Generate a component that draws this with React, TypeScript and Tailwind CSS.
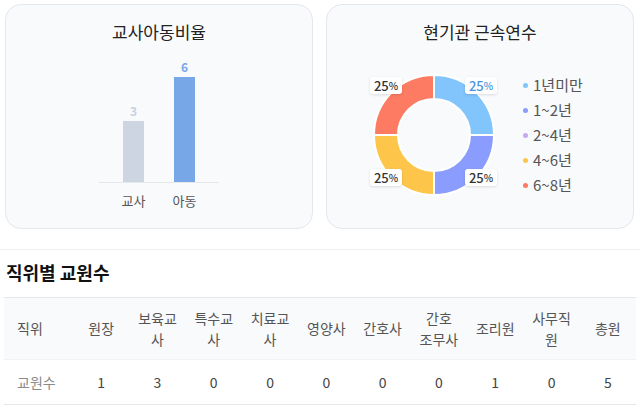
import React from "react";

const bars = [
  { label: "교사", value: 3, height: 61, bar: "bg-[#cdd5e3]", text: "text-[#c9d1de]" },
  { label: "아동", value: 6, height: 105, bar: "bg-[#78a7e8]", text: "text-[#7ba7e8]" },
];

const legend = [
  { label: "1년미만", dot: "bg-[#82c4fc]" },
  { label: "1~2년", dot: "bg-[#8a9cfd]" },
  { label: "2~4년", dot: "bg-[#c6a8f0]" },
  { label: "4~6년", dot: "bg-[#fdc64b]" },
  { label: "6~8년", dot: "bg-[#fd7b63]" },
];

const slices = [
  { d: "M70 10 A60 60 0 0 1 130 70 L106 70 A36 36 0 0 0 70 34 Z", fill: "#82c4fc" },
  { d: "M130 70 A60 60 0 0 1 70 130 L70 106 A36 36 0 0 0 106 70 Z", fill: "#8a9cfd" },
  { d: "M70 130 A60 60 0 0 1 10 70 L34 70 A36 36 0 0 0 70 106 Z", fill: "#fdc64b" },
  { d: "M10 70 A60 60 0 0 1 70 10 L70 34 A36 36 0 0 0 34 70 Z", fill: "#fd7b63" },
];

const pctLabels = [
  { pos: "left-[6px] top-[12px]", color: "text-[#333333]" },
  { pos: "left-[101px] top-[12px]", color: "text-[#4b93e0]" },
  { pos: "left-[6px] top-[104px]", color: "text-[#333333]" },
  { pos: "left-[101px] top-[104px]", color: "text-[#333333]" },
];

const headers: React.ReactNode[] = [
  "원장",
  "보육교사",
  "특수교사",
  "치료교사",
  "영양사",
  "간호사",
  <>
    간호
    <br />
    조무사
  </>,
  "조리원",
  "사무직원",
  "총원",
];
const counts = [1, 3, 0, 0, 0, 0, 0, 1, 0, 5];

function Card({ title, children }: { title: string; children: React.ReactNode }) {
  return (
    <div className="w-[308px] h-[225px] rounded-2xl border border-[#e5e7eb] bg-[#f8fafc] flex flex-col items-center pt-[15px]">
      <h3 className="text-[17px] leading-[24px] text-[#222222]">{title}</h3>
      {children}
    </div>
  );
}

export default function App() {
  return (
    <div className="w-[642px] h-[409px] overflow-hidden bg-white font-['Noto_Sans_CJK_KR','Noto_Sans',sans-serif]">
      <div className="flex gap-[13px] pl-[5px] pt-[4px]">
        {/* 교사아동비율 */}
        <Card title="교사아동비율">
          <div className="w-[120px] mt-[8px]">
            <div className="h-[131px] flex items-end gap-[30px] pl-[24px] border-b border-[#e5e7eb]">
              {bars.map((b) => (
                <div key={b.label} className="w-[21px] flex flex-col items-center">
                  <span className={`text-[12px] leading-[14px] font-bold mb-[3px] ${b.text}`}>{b.value}</span>
                  <div className={`w-[21px] ${b.bar}`} style={{ height: b.height }} />
                </div>
              ))}
            </div>
            <div className="flex gap-[30px] pl-[24px] mt-[9px]">
              {bars.map((b) => (
                <div key={b.label} className="w-[21px] flex justify-center">
                  <span className="whitespace-nowrap text-[13px] leading-[18px] text-[#555555]">{b.label}</span>
                </div>
              ))}
            </div>
          </div>
        </Card>

        {/* 현기관 근속연수 */}
        <Card title="현기관 근속연수">
          <div className="self-stretch flex items-center mt-[21px] pl-[37px] gap-[19px]">
            <div className="relative w-[140px] h-[140px]">
              <svg width="140" height="140" viewBox="0 0 140 140">
                {slices.map((s) => (
                  <path key={s.d} d={s.d} fill={s.fill} stroke="#ffffff" strokeWidth="2" />
                ))}
              </svg>
              {pctLabels.map((l, i) => (
                <div
                  key={i}
                  className={`absolute ${l.pos} w-[32px] h-[17px] rounded-[3px] bg-white shadow-[0_1px_3px_rgba(0,0,0,0.12)] flex items-center justify-center ${l.color}`}
                >
                  <span className="text-[13px] leading-none font-medium">25</span>
                  <span className="text-[10px] leading-none font-medium">%</span>
                </div>
              ))}
            </div>
            <ul className="flex flex-col">
              {legend.map((l) => (
                <li key={l.label} className="flex items-center gap-[5px] h-[25px]">
                  <span className={`w-[5px] h-[5px] rounded-full ${l.dot}`} />
                  <span className="text-[15px] leading-[20px] text-[#555555]">{l.label}</span>
                </li>
              ))}
            </ul>
          </div>
        </Card>
      </div>

      <div className="mt-[20px] w-[640px] h-px bg-[#eeeeee]" />

      <h2 className="mt-[10px] ml-[6px] text-[18px] leading-[24px] font-bold text-[#111111]">직위별 교원수</h2>

      <table className="mt-[13px] ml-[4px] w-[632px] table-fixed border-collapse text-[14px] leading-[21px]">
        <colgroup>
          <col className="w-[69px]" />
        </colgroup>
        <thead>
          <tr className="h-[62px] bg-[#f8fafc] border-t border-[#e5e7eb] border-b border-b-[#f1f3f5]">
            <th className="px-[13px] text-left font-normal text-[#555555]">직위</th>
            {headers.map((h, i) => (
              <th key={i} className="px-[6px] text-center font-normal text-[#555555]">
                {h}
              </th>
            ))}
          </tr>
        </thead>
        <tbody>
          <tr className="h-[45px] border-b border-[#e5e7eb]">
            <td className="px-[13px] text-left text-[#8a8a8a]">교원수</td>
            {counts.map((c, i) => (
              <td key={i} className="px-[6px] text-center text-[#444444]">
                {c}
              </td>
            ))}
          </tr>
        </tbody>
      </table>
    </div>
  );
}
